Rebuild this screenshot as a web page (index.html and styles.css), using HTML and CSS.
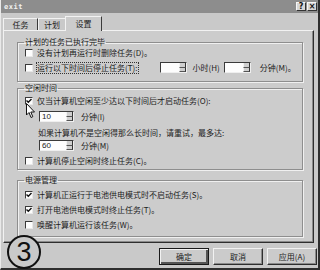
FILE: index.html
```html
<!DOCTYPE html>
<html>
<head>
    <title>exit 属性</title>
    <link rel="stylesheet" href="styles.css">
</head>
<body>
    <div class="dialog">
        <div class="titlebar">
            <span class="title">exit</span>
            <div class="title-btns">
                <span class="tbtn">?</span>
                <span class="tbtn">×</span>
            </div>
        </div>

        <div class="tabs">
            <div class="tab tab-task">任务</div>
            <div class="tab tab-plan">计划</div>
            <div class="tab tab-set active">设置</div>
        </div>

        <div class="panel">
            <fieldset class="group group-done">
                <legend>计划的任务已执行完毕</legend>
                <div class="row">
                    <span class="check"></span>
                    <span>没有计划再运行时删除任务(<u>D</u>)。</span>
                </div>
                <div class="row row-gap">
                    <span class="check"></span>
                    <span class="focus">运行以下时间后停止任务(<u>T</u>):</span>
                    <span class="spin spin-small spin-first"><span class="spin-text"></span><span class="spin-btns"><i></i><i></i></span></span>
                    <span class="unit">小时(<u>H</u>)</span>
                    <span class="spin spin-small spin-second"><span class="spin-text"></span><span class="spin-btns"><i></i><i></i></span></span>
                    <span class="unit unit-wide">分钟(<u>M</u>)。</span>
                </div>
            </fieldset>

            <fieldset class="group group-idle">
                <legend>空闲时间</legend>
                <div class="row idle-first">
                    <span class="check checked"><svg width="6" height="6" viewBox="0 0 6 6"><path d="M0.5 2.5 L2.3 4.3 L5.5 1" fill="none" stroke="#111" stroke-width="1.4"/></svg></span>
                    <span>仅当计算机空闲至少达以下时间后才启动任务(<u>O</u>):</span>
                </div>
                <div class="row indent idle-spin1">
                    <span class="spin spin-wide"><span class="spin-text">10</span><span class="spin-btns"><i></i><i></i></span></span>
                    <span class="unit unit-far">分钟(<u>I</u>)</span>
                </div>
                <div class="row indent idle-note">如果计算机不是空闲得那么长时间，请重试，最多达:</div>
                <div class="row indent idle-spin2">
                    <span class="spin spin-wide"><span class="spin-text">60</span><span class="spin-btns"><i></i><i></i></span></span>
                    <span class="unit unit-far">分钟(<u>M</u>)</span>
                </div>
                <div class="row idle-last">
                    <span class="check"></span>
                    <span>计算机停止空闲时终止任务(<u>C</u>)。</span>
                </div>
            </fieldset>

            <fieldset class="group group-power">
                <legend>电源管理</legend>
                <div class="row power-row">
                    <span class="check checked"><svg width="6" height="6" viewBox="0 0 6 6"><path d="M0.5 2.5 L2.3 4.3 L5.5 1" fill="none" stroke="#111" stroke-width="1.4"/></svg></span>
                    <span>计算机正运行于电池供电模式时不启动任务(<u>S</u>)。</span>
                </div>
                <div class="row power-row">
                    <span class="check checked"><svg width="6" height="6" viewBox="0 0 6 6"><path d="M0.5 2.5 L2.3 4.3 L5.5 1" fill="none" stroke="#111" stroke-width="1.4"/></svg></span>
                    <span>打开电池供电模式时终止任务(<u>T</u>)。</span>
                </div>
                <div class="row power-row">
                    <span class="check"></span>
                    <span>唤醒计算机运行该任务(<u>W</u>)。</span>
                </div>
            </fieldset>
        </div>

        <div class="buttons">
            <button class="btn default">确定</button>
            <button class="btn">取消</button>
            <button class="btn">应用(<u>A</u>)</button>
        </div>

        <!-- mouse pointer over the idle checkbox -->
        <svg class="cursor" width="10" height="16" viewBox="0 0 10 16">
            <path d="M0.5 0.5 L0.5 12 L3 9.5 L5 14.5 L6.8 13.7 L4.8 9 L8.5 9 Z" fill="#fff" stroke="#111" stroke-width="1"/>
        </svg>

        <div class="badge">3</div>
    </div>
</body>
</html>
```

FILE: styles.css
```css
body {
    margin: 0;
    width: 320px;
    height: 270px;
    overflow: hidden;
    background-color: #c9c9c9;
}

.dialog {
    position: relative;
    box-sizing: border-box;
    width: 320px;
    height: 270px;
    background-color: #c9c9c9;
    border-left: 1px solid #e9e9e9;
    border-right: 2px solid #2e2e2e;
    border-bottom: 2px solid #2e2e2e;
    font-family: "Noto Sans CJK SC", sans-serif;
    font-size: 8px;
    line-height: 10px;
    color: #1c1c1c;
}

u {
    text-decoration: none;
}

.titlebar {
    height: 13px;
    background-color: #8d8d8d;
    display: flex;
    align-items: center;
    padding: 0 1px 0 3px;
}

.title {
    color: #f2f2f2;
    font-family: "DejaVu Sans Mono", monospace;
    font-weight: bold;
    font-size: 7px;
    letter-spacing: 0.5px;
}

.title-btns {
    margin-left: auto;
    display: flex;
    gap: 1px;
}

.tbtn {
    box-sizing: border-box;
    width: 10px;
    height: 9px;
    background-color: #d6d6d6;
    border-top: 1px solid #f6f6f6;
    border-left: 1px solid #f6f6f6;
    border-right: 1px solid #333;
    border-bottom: 1px solid #333;
    font-family: "DejaVu Sans", sans-serif;
    font-weight: bold;
    font-size: 8px;
    line-height: 7px;
    text-align: center;
    color: #111;
}

.tabs {
    height: 17px;
    display: flex;
    align-items: flex-end;
    padding-left: 2px;
}

.tab {
    box-sizing: border-box;
    height: 12px;
    display: flex;
    align-items: center;
    justify-content: center;
    border-top: 1px solid #f2f2f2;
    border-left: 1px solid #f2f2f2;
    border-right: 1px solid #3a3a3a;
    background-color: #c9c9c9;
}

.tab-task {
    width: 35px;
}

.tab-plan {
    width: 27px;
    border-right: none;
}

.tab-set {
    width: 37px;
}

.tab.active {
    position: relative;
    z-index: 1;
    height: 15px;
    margin-bottom: -1px;
    padding-bottom: 1px;
    background-color: #cccccc;
}

.panel {
    box-sizing: border-box;
    width: 311px;
    height: 213px;
    margin-left: 2px;
    padding: 6px 10px 0 13px;
    background-color: #cccccc;
    border-top: 1px solid #f2f2f2;
    border-left: 1px solid #f2f2f2;
    border-right: 1px solid #2e2e2e;
    border-bottom: 1px solid #2e2e2e;
    box-shadow: inset -1px -1px 0 #8a8a8a;
}

.group {
    box-sizing: border-box;
    width: 286px;
    margin: 0;
    padding: 0 0 0 7px;
    border: 1px solid #8e8e8e;
    box-shadow: inset 1px 1px 0 #f0f0f0, 1px 1px 0 #f0f0f0;
}

.group legend {
    padding: 0 1px;
    margin-left: -1px;
    line-height: 10px;
}

.group-done {
    padding-bottom: 8px;
}

.group-idle {
    margin-top: 1px;
    padding-bottom: 3px;
}

.group-power {
    margin-top: 5px;
    padding-bottom: 6px;
}

.row {
    height: 11px;
    display: flex;
    align-items: center;
    white-space: nowrap;
}

.row-gap {
    margin-top: 4px;
}

.indent {
    padding-left: 14px;
}

.idle-first {
    margin-top: 2px;
}

.idle-spin1 {
    margin-top: 5px;
}

.idle-note {
    margin-top: 5px;
    padding-left: 13px;
}

.idle-spin2 {
    margin-top: 2px;
}

.idle-last {
    margin-top: 4px;
}

.power-row {
    margin-top: 4px;
}

.check {
    box-sizing: border-box;
    width: 8px;
    height: 8px;
    margin-right: 4px;
    background-color: #fdfdfd;
    border-top: 1px solid #3a3a3a;
    border-left: 1px solid #3a3a3a;
    border-right: 1px solid #e8e8e8;
    border-bottom: 1px solid #e8e8e8;
    display: flex;
    align-items: center;
    justify-content: center;
    flex-shrink: 0;
}

.focus {
    outline: 1px dotted #333;
    outline-offset: 0;
    padding-right: 1px;
}

.spin {
    box-sizing: border-box;
    height: 11px;
    display: flex;
    background-color: #fdfdfd;
    border-top: 1px solid #3a3a3a;
    border-left: 1px solid #3a3a3a;
    border-right: 1px solid #efefef;
    border-bottom: 1px solid #efefef;
}

.spin-small {
    width: 27px;
}

.spin-first {
    margin-left: 22px;
}

.spin-second {
    margin-left: 4px;
}

.spin-wide {
    width: 35px;
}

.spin-text {
    flex: 1;
    padding-left: 2px;
    font-family: "Liberation Sans", sans-serif;
    font-size: 8px;
    line-height: 9px;
}

.spin-btns {
    width: 7px;
    display: flex;
    flex-direction: column;
}

.spin-btns i {
    flex: 1;
    background-color: #cfcfcf;
    border-left: 1px solid #f2f2f2;
    border-right: 1px solid #333;
    border-bottom: 1px solid #555;
}

.unit {
    margin-left: 5px;
}

.unit-wide {
    margin-left: 9px;
}

.unit-far {
    margin-left: 7px;
}

.buttons {
    display: flex;
    justify-content: flex-end;
    gap: 4px;
    margin-top: 5px;
    padding-right: 1px;
}

.btn {
    box-sizing: border-box;
    width: 50px;
    height: 17px;
    padding: 0;
    background-color: #cbcbcb;
    border-top: 1px solid #f2f2f2;
    border-left: 1px solid #f2f2f2;
    border-right: 1px solid #2e2e2e;
    border-bottom: 1px solid #2e2e2e;
    box-shadow: inset -1px -1px 0 #8a8a8a;
    font-family: "Noto Sans CJK SC", sans-serif;
    font-size: 8px;
    color: #1c1c1c;
}

.btn.default {
    border: 1px solid #1a1a1a;
    box-shadow: inset 1px 1px 0 #f2f2f2, inset -2px -2px 0 #555;
}

.cursor {
    position: absolute;
    left: 25px;
    top: 103px;
}

.badge {
    position: absolute;
    left: 6px;
    top: 235px;
    box-sizing: border-box;
    width: 34px;
    height: 34px;
    border: 2px solid #111;
    border-radius: 50%;
    background-color: #c9c9c9;
    font-family: "Liberation Sans", sans-serif;
    font-size: 27px;
    line-height: 30px;
    text-align: center;
    color: #111;
}
```
